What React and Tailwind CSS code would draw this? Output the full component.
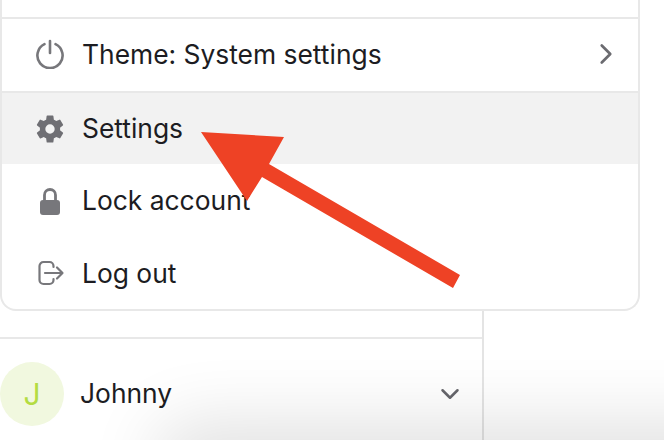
import React from 'react';
import { ChevronRight, ChevronDown } from 'lucide-react';
import { IoSettingsSharp } from 'react-icons/io5';

const PowerIcon = () => (
    <svg width="30" height="30" viewBox="0 0 30 30" fill="none" stroke="#77777b" strokeWidth="2.6" strokeLinecap="round">
        <path d="M9.5 5.2 A12.6 12.6 0 1 0 20.5 5.2" />
        <path d="M15 2 V14" />
    </svg>
);

const LockIcon = () => (
    <svg width="30" height="30" viewBox="0 0 30 30" fill="none">
        <path d="M9.5 15 V9 a5.5 5.5 0 0 1 11 0 V15" stroke="#77777b" strokeWidth="2.8" />
        <rect x="5" y="14" width="20" height="15" rx="3" fill="#77777b" />
    </svg>
);

const LogOutIcon = () => (
    <svg width="30" height="30" viewBox="0 0 30 30" fill="none" stroke="#77777b" strokeWidth="2.2" strokeLinecap="round" strokeLinejoin="round">
        <path d="M18.5 9 V8 a4 4 0 0 0 -4 -4 H8.5 a4 4 0 0 0 -4 4 V22 a4 4 0 0 0 4 4 H14.5 a4 4 0 0 0 4 -4 V21" />
        <path d="M10 15 H27 M22 9.5 L27.5 15 L22 20.5" />
    </svg>
);

const rows = [
    { label: 'Theme: System settings', icon: <PowerIcon />, chevron: true, border: true, h: 'h-[74px] pb-[2px]' },
    { label: 'Settings', icon: <IoSettingsSharp size={30} color="#6f6f74" />, active: true, border: true, h: 'h-[73px]' },
    { label: 'Lock account', icon: <LockIcon />, h: 'h-[73px]' },
    { label: 'Log out', icon: <LogOutIcon />, h: 'h-[72px]' },
];

export default function App() {
    return (
        <div className="relative w-[664px] h-[440px] overflow-hidden bg-white text-[#1c1c22] font-['Inter','Roboto',sans-serif]">
            {/* menu card */}
            <div className="w-[640px] pt-[17px] border-2 border-t-0 border-[#e8e8e8] rounded-b-[16px]">
                {rows.map(row => (
                    <div
                        key={row.label}
                        className={`flex items-center pl-[33px] pr-[15px] ${row.h} ${row.border ? 'border-t-2 border-[#e8e8e8]' : ''} ${row.active ? 'bg-[#f2f2f2]' : ''}`}
                    >
                        <span className="w-[30px] h-[30px] flex items-center justify-center">{row.icon}</span>
                        <span className="ml-[17px] text-[26.4px] leading-none flex-1">{row.label}</span>
                        {row.chevron && <ChevronRight size={34} color="#6b6b70" strokeWidth={1.9} />}
                    </div>
                ))}
            </div>

            {/* sidebar bottom */}
            <div className="w-[484px] h-[130px] border-r-2 border-[#e4e4e4] pt-[26px]">
                <div className="border-t-2 border-[#e8e8e8] flex items-center pt-[23px] pr-[17px]">
                    <div className="w-[64px] h-[64px] rounded-full bg-[#f1f8df] text-[#b4dc42] flex items-center justify-center text-[30px]">J</div>
                    <span className="ml-[16px] text-[26.4px] flex-1">Johnny</span>
                    <ChevronDown size={30} color="#66666b" strokeWidth={2} />
                </div>
            </div>

            {/* bottom shadow */}
            <div className="absolute left-[190px] right-[-80px] top-[456px] h-[20px] rounded-full shadow-[0_0_70px_34px_rgba(0,0,0,0.12)]" />

            {/* annotation arrow */}
            <svg className="absolute left-0 top-0" width="664" height="440">
                <polygon points="201,132 284,137 269,164 460,275 453,288 262,177 247,201" fill="#ee4225" />
            </svg>
        </div>
    );
}
